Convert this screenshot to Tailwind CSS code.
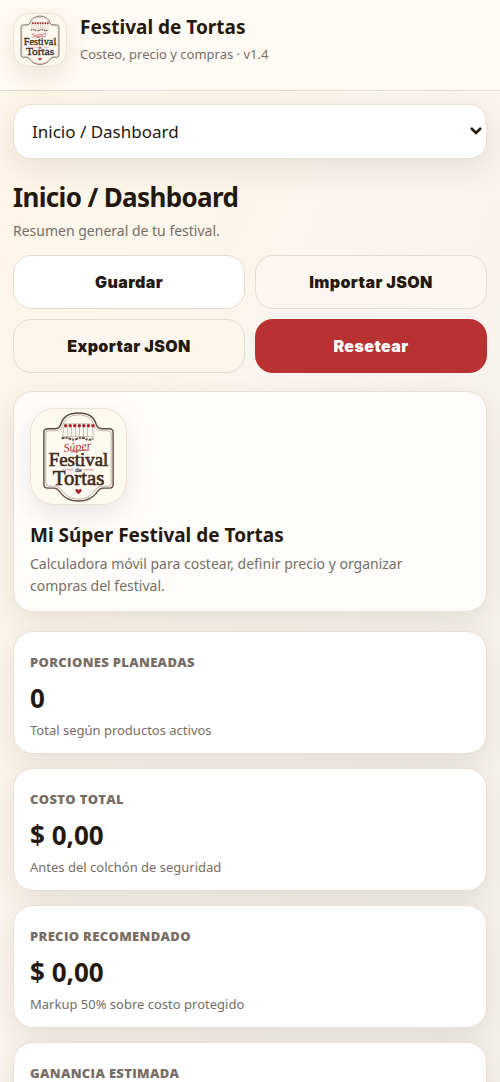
<!DOCTYPE html>
<html lang="es">
<head>
    <meta charset="UTF-8">
    <meta name="viewport" content="width=device-width, initial-scale=1">
    <title>Festival de Tortas</title>
    <script src="https://cdn.jsdelivr.net/npm/@tailwindcss/browser@4"></script>
</head>
<body class="min-h-screen bg-linear-to-br from-[#fef6e7] via-[#faf5ee] via-40% to-[#f4f0eb] font-['Noto_Sans','Open_Sans',sans-serif] text-[#24180f]">
    <!-- Logo reutilizable -->
    <svg class="hidden" aria-hidden="true">
        <symbol id="logo" viewBox="0 0 96 96">
            <g fill="none" stroke="#5d4a40">
                <path stroke-width="1.4" d="M13 24q0-4 4-4h7q4 0 6-4C32 8 39 4 48 4s16 4 18 12q2 4 6 4h7q4 0 4 4v52q0 4-4 4h-6q-4 0-7 5c-4 5-10 8-18 8s-14-3-18-8q-3-5-7-5h-6q-4 0-4-4z"/>
                <path stroke-width=".4" d="M15 25q0-3 3-3h6q6 0 8-5C34 10 40 6 48 6s14 4 16 11q2 5 8 5h6q3 0 3 3v50q0 3-3 3h-5q-6 0-9 5c-4 5-9 8-16 8s-12-3-16-8q-3-5-9-5h-5q-3 0-3-3z"/>
                <path stroke-width=".6" stroke="#a0958d" d="M33 18 32 28M62 18l1 10M37 18v10M41 18v10M45 18v10M49 18v10M53 18v10M57 18v10M32 28h31M34 15h28"/>
                <path stroke-width="2" stroke-dasharray="3 1 2 1" d="M31 30q4-2 8 0t8 0 8 0 8 0"/>
            </g>
            <path stroke="#a92832" stroke-width="3.500" stroke-linecap="round" stroke-dasharray="0 4.600" d="M35 17h28"/>
            <text x="47" y="42" text-anchor="middle" font-family="Liberation Serif, serif" font-style="italic" font-size="12" fill="#b92b38" transform="rotate(-6 47 40)">Súper</text>
            <path d="M41 43.500q8-2 18-2" fill="none" stroke="#b92b38" stroke-width=".8"/>
            <g font-family="Liberation Serif, serif" text-anchor="middle" fill="#3d2920" stroke="#3d2920">
                <text x="48" y="57.500" font-size="19" stroke-width=".6">Festival</text>
                <text x="48" y="64" font-size="7" stroke-width=".2">de</text>
                <text x="48" y="76.500" font-size="21" stroke-width=".6">Tortas</text>
            </g>
            <path d="M32 61.500h11M53 61.500h11" stroke="#c56a70" stroke-width=".7"/>
            <path fill="#a92832" d="M48 86c-6-4-2-7 0-4 2-3 6 0 0 4z"/>
        </symbol>
    </svg>

    <header class="flex items-start gap-[13px] border-b border-[#e6ddd2] bg-[#fffaf3] px-[13px] pt-[13px] pb-[23px]">
        <svg class="size-[54px] shrink-0 rounded-2xl border border-[#ece2d6] bg-[#fffaf1] shadow-[0_10px_28px_rgba(50,40,25,0.10)]" role="img" aria-label="Logo"><use href="#logo"/></svg>
        <div>
            <p class="text-[19px] leading-7 font-bold">Festival de Tortas</p>
            <p class="text-[13px] leading-[26px] text-[#786d64]">Costeo, precio y compras · v1.4</p>
        </div>
    </header>

    <main class="px-[13px] pt-[13px] pb-6">
        <div class="relative">
            <select aria-label="Sección" class="h-[55px] w-full appearance-none rounded-[18px] border border-[#e9dfd3] bg-white px-[18px] text-[17px] shadow-[0_10px_30px_rgba(50,40,25,0.10)]">
                <option>Inicio / Dashboard</option>
            </select>
            <svg class="pointer-events-none absolute top-[22px] right-1 h-[10px] w-[14px]" viewBox="0 0 14 10" fill="none" stroke="currentColor" stroke-width="2.500"><path d="m2 2 5 5 5-5"/></svg>
        </div>

        <h1 class="mt-5 text-[26px] leading-9 font-bold tracking-tight">Inicio / Dashboard</h1>
        <p class="mt-1 text-sm leading-6 text-[#786d64]">Resumen general de tu festival.</p>

        <div class="mt-3 grid grid-cols-2 gap-[10px] font-['Inter',sans-serif] text-base font-black tracking-wide">
            <button class="h-[54px] rounded-[18px] border border-[#e6ddd2] bg-white">Guardar</button>
            <button class="h-[54px] rounded-[18px] border border-[#e6ddd2] bg-[#fbf6ef]">Importar JSON</button>
            <button class="h-[54px] rounded-[18px] border border-[#e6ddd2] bg-[#fcf6ee]">Exportar JSON</button>
            <button class="h-[54px] rounded-[18px] bg-[#b83232] text-white">Resetear</button>
        </div>

        <section class="mt-[18px] rounded-[20px] border border-[#e9e0d5] bg-[#fefdfc] px-4 pt-4 pb-[14px] shadow-[0_10px_30px_rgba(50,40,25,0.10)]">
            <svg class="size-[97px] rounded-3xl border border-[#ece2d6] bg-[#fffaf1] shadow-[0_10px_28px_rgba(50,40,25,0.10)]" role="img" aria-label="Logo"><use href="#logo"/></svg>
            <h2 class="mt-4 text-[19px] leading-7 font-bold">Mi Súper Festival de Tortas</h2>
            <p class="mt-1 max-w-[420px] text-sm leading-[22px] text-[#786d64]">Calculadora móvil para costear, definir precio y organizar compras del festival.</p>
        </section>

        <div class="mt-[19px] grid gap-[14px]">
            <article class="rounded-[20px] border border-[#e9e0d5] bg-white px-4 pt-4 pb-[9px] shadow-[0_10px_30px_rgba(50,40,25,0.10)]">
                <h3 class="font-['Open_Sans',sans-serif] text-[13px] leading-7 font-extrabold tracking-wide text-[#786d64]">PORCIONES PLANEADAS</h3>
                <p class="mt-1 text-[26px] leading-9 font-bold">0</p>
                <p class="text-[13px] leading-7 text-[#786d64]">Total según productos activos</p>
            </article>
            <article class="rounded-[20px] border border-[#e9e0d5] bg-white px-4 pt-4 pb-[9px] shadow-[0_10px_30px_rgba(50,40,25,0.10)]">
                <h3 class="font-['Open_Sans',sans-serif] text-[13px] leading-7 font-extrabold tracking-wide text-[#786d64]">COSTO TOTAL</h3>
                <p class="mt-1 text-[26px] leading-9 font-bold">$ 0,00</p>
                <p class="text-[13px] leading-7 text-[#786d64]">Antes del colchón de seguridad</p>
            </article>
            <article class="rounded-[20px] border border-[#e9e0d5] bg-white px-4 pt-4 pb-[9px] shadow-[0_10px_30px_rgba(50,40,25,0.10)]">
                <h3 class="font-['Open_Sans',sans-serif] text-[13px] leading-7 font-extrabold tracking-wide text-[#786d64]">PRECIO RECOMENDADO</h3>
                <p class="mt-1 text-[26px] leading-9 font-bold">$ 0,00</p>
                <p class="text-[13px] leading-7 text-[#786d64]">Markup 50% sobre costo protegido</p>
            </article>
            <article class="rounded-[20px] border border-[#e9e0d5] bg-white px-4 pt-4 pb-[9px] shadow-[0_10px_30px_rgba(50,40,25,0.10)]">
                <h3 class="font-['Open_Sans',sans-serif] text-[13px] leading-7 font-extrabold tracking-wide text-[#786d64]">GANANCIA ESTIMADA</h3>
                <p class="mt-1 text-[26px] leading-9 font-bold">$ 0,00</p>
                <p class="text-[13px] leading-7 text-[#786d64]">Según precio recomendado</p>
            </article>
        </div>
    </main>
</body>
</html>
